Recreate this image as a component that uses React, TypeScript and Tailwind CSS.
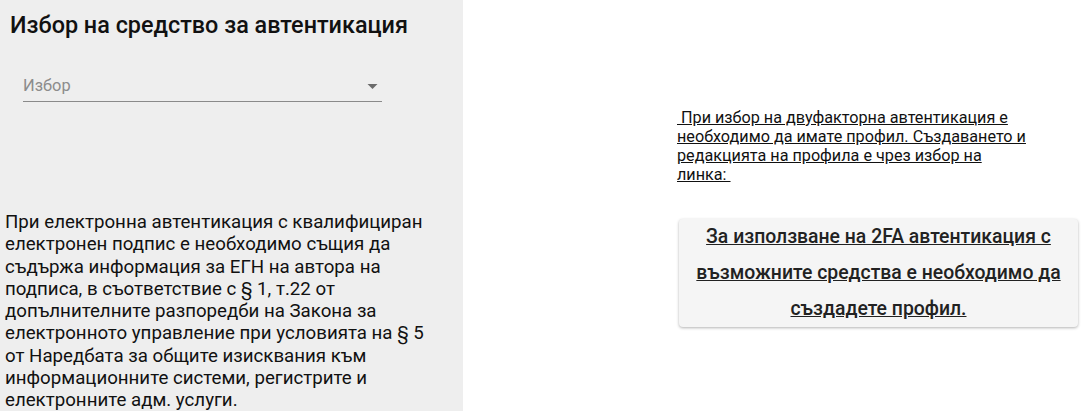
export default function App() {
  return (
    <div className="flex h-[411px] w-[1088px] overflow-hidden bg-white font-['Roboto',sans-serif] text-black">
      {/* Лява колона */}
      <section className="flex w-[463px] shrink-0 flex-col bg-[#eeeeee]">
        <h1 className="pl-[10px] pt-[10px] text-[23.4px] font-medium leading-[30px] text-[#111]">
          Избор на средство за автентикация
        </h1>
        <div className="ml-[23px] mt-[36px] w-[359px]">
          <div className="flex items-center justify-between border-b border-[#8a8a8a] pb-[5px]">
            <span className="text-[16.4px] leading-[20px] text-[#8c8c8c]">Избор</span>
            <svg width="11" height="5" viewBox="0 0 10 5" className="mr-[4px]">
              <path d="M0 0 L10 0 L5 5 Z" fill="#6b6b6b" />
            </svg>
          </div>
        </div>
        <p className="mt-[109px] pl-[5px] pr-[33px] text-[18.7px] leading-[22.25px] text-[#111]">
          При електронна автентикация с квалифициран електронен подпис е необходимо
          същия да съдържа информация за ЕГН на автора на подписа, в съответствие с
          §&nbsp;1, т.22 от допълнителните разпоредби на Закона за електронното
          управление при условията на §&nbsp;5 от Наредбата за общите изисквания към
          информационните системи, регистрите и електронните адм. услуги.
        </p>
      </section>

      {/* Дясна колона */}
      <section className="flex flex-1 flex-col items-start pl-[214px] pt-[108px]">
        <a className="w-[356px] text-[16.2px] leading-[19px] text-[#111] underline">
          &nbsp;При избор на двуфакторна автентикация е необходимо да имате профил.
          Създаването и редакцията на профила е чрез избор на линка:&nbsp;
        </a>
        <div className="ml-[2px] mt-[35px] flex h-[108px] w-[399px] items-center justify-center rounded-[4px] bg-[#f5f5f5] px-[12px] shadow-[0_1px_3px_rgba(0,0,0,0.3)]">
          <a className="text-center text-[19.4px] font-medium leading-[36px] text-[#222] underline">
            За използване на 2FA автентикация с възможните средства е необходимо да
            създадете профил.
          </a>
        </div>
      </section>
    </div>
  );
}
